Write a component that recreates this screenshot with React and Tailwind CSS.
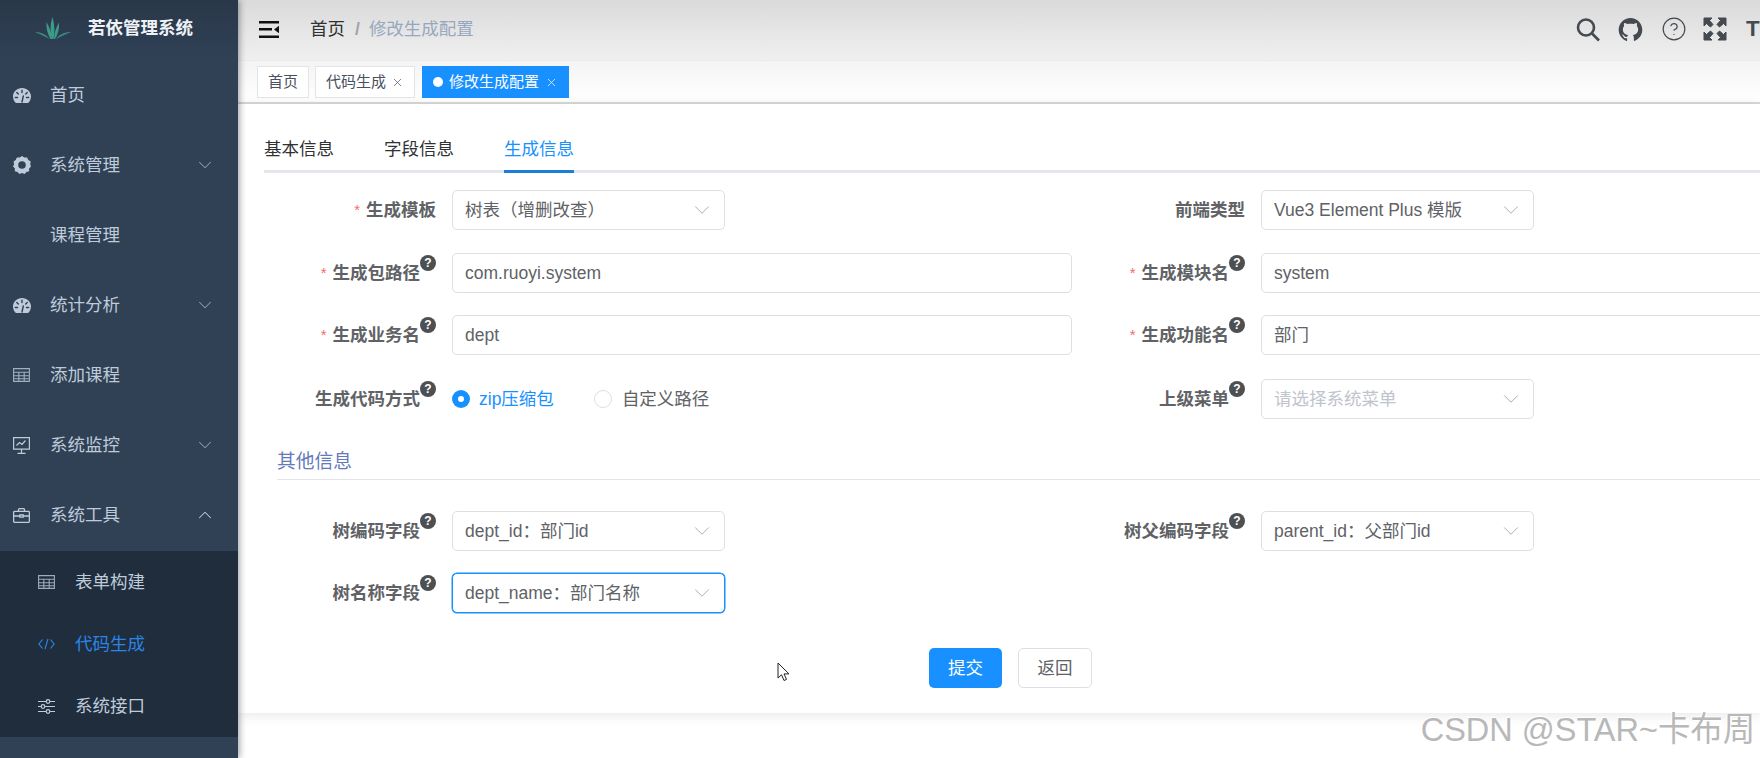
import { ChevronDown, ChevronUp, X, CircleHelp } from 'lucide-react';
import { AiOutlineGithub } from 'react-icons/ai';

const FONT = 'font-["Liberation_Sans","Noto_Sans_CJK_SC",sans-serif]';

function GaugeIcon() {
  return (
    <svg viewBox="0 0 18 15" className="w-[18px] h-[15px]" fill="currentColor">
      <path d="M9 0C4 0 0 3.800 0 8.600c0 2.200.8 4.200 2.100 5.700.3.400.8.700 1.300.700h11.200c.5 0 1-.3 1.300-.7C17.200 12.800 18 10.800 18 8.600 18 3.800 14 0 9 0z" />
      <g stroke="#304156" strokeWidth="1.400" strokeLinecap="round" fill="none">
        <path d="M9 2.200v2.400M3.800 4.400l1.500 1.600M14.200 4.400l-1.500 1.600M2.300 9.500h2.200M13.500 9.500h2.200M9 14l1.300-6" />
      </g>
    </svg>
  );
}

function GearIcon() {
  return (
    <svg viewBox="0 0 18 18" className="w-[18px] h-[18px]" fill="currentColor">
      <path fillRule="evenodd" d="M9 0l2.300 1.600 2.800-.2 1.200 2.600 2.400 1.400-.5 2.800L18 10.500l-1.900 2 .1 2.800-2.800.6L11.700 18 9 17l-2.700 1-1.700-2.100-2.800-.6.1-2.800-1.900-2 1.100-2.300-.5-2.800L2.700 4l1.200-2.600 2.800.2L9 0zm0 5.200a3.800 3.800 0 100 7.600 3.800 3.800 0 000-7.600z" />
    </svg>
  );
}

function TableIcon() {
  return (
    <svg viewBox="0 0 17 14" className="w-[17px] h-[14px] opacity-80" fill="none" stroke="currentColor" strokeWidth="1.100">
      <path d="M.6.6h15.800v12.800H.6zM.6 4.200h15.800M.6 7.800h15.800M.6 10.800h15.800M5.800 4.200v9.200M11.200 4.200v9.200" />
    </svg>
  );
}

function MonitorIcon() {
  return (
    <svg viewBox="0 0 17 17" className="w-[17px] h-[17px]" fill="none" stroke="currentColor" strokeWidth="1.200">
      <path d="M.6.6h15.800v11.600H.6zM8.500 12.200v4M4.500 16.400h8M3.500 8.500l3-3 2.500 2 3.500-4" />
    </svg>
  );
}

function ToolboxIcon() {
  return (
    <svg viewBox="0 0 17 15" className="w-[17px] h-[15px]" fill="none" stroke="currentColor" strokeWidth="1.300">
      <path d="M1.800 3.400h13.400a1.200 1.200 0 011.200 1.200v8.600a1.200 1.200 0 01-1.200 1.200H1.800a1.200 1.200 0 01-1.200-1.200V4.600a1.200 1.200 0 011.200-1.200zM5.500 3.400V1.800A1.200 1.200 0 016.700.6h3.600a1.200 1.200 0 011.200 1.200v1.600M.6 8h6M10.400 8h6M6.800 7h3.400v2.200H6.800z" />
    </svg>
  );
}

function CodeIcon() {
  return (
    <svg viewBox="0 0 17 12" className="w-[17px] h-[12px]" fill="none" stroke="currentColor" strokeWidth="1.200">
      <path d="M4.500 1.500L.9 6l3.600 4.500M12.500 1.500L16.100 6l-3.600 4.500M10 .8L7 11.200" />
    </svg>
  );
}

function SlidersIcon() {
  return (
    <svg viewBox="0 0 17 15" className="w-[17px] h-[15px]" fill="none" stroke="currentColor" strokeWidth="1.200">
      <path d="M0 2.500h8M12 2.500h5M0 7.500h3M7 7.500h10M0 12.500h8M12 12.500h5" />
      <circle cx="10" cy="2.500" r="1.800" />
      <circle cx="5" cy="7.500" r="1.800" />
      <circle cx="10" cy="12.500" r="1.800" />
    </svg>
  );
}

function Logo() {
  return (
    <svg viewBox="0 0 36 22" className="w-[36px] h-[22px]" fill="#3d9c86">
      <path d="M17 22C15 15 15 7 17.500 0 19.500 7 20 15 18.500 22z" />
      <path d="M15.500 22C12.500 17 11 11 11.500 5c3 5 5 11 5.500 17z" />
      <path d="M20 22c3-5 4.500-10.500 4-16.500-3 5-5 11-5 16.500z" />
      <path d="M14.500 22C10 19.500 5.500 17 0 15.500 4.500 14.500 11 17 14.500 22z" fillOpacity=".8" />
      <path d="M21 22c4.500-2.500 9.500-5 15-6.500-5-1-11.500 1.500-15 6.500z" fillOpacity=".8" />
    </svg>
  );
}

function NavItem({ icon: Icon, label, arrow }) {
  return (
    <div className="h-[70px] flex items-center text-[17.5px] text-[#bfcbd9]">
      <span className="w-[50px] pl-[13px] flex items-center">{Icon && <Icon />}</span>
      <span>{label}</span>
      {arrow === 'down' && <ChevronDown size={22} strokeWidth={1.100} className="ml-auto mr-[22px] text-[#909db0]" />}
      {arrow === 'up' && <ChevronUp size={22} strokeWidth={1.100} className="ml-auto mr-[22px] text-[#c5cfdb]" />}
    </div>
  );
}

function SubItem({ icon: Icon, label, active }) {
  return (
    <div className={`h-[62px] flex items-center text-[17.5px] ${active ? 'text-[#2b85e4]' : 'text-[#bfcbd9]'}`}>
      <span className="w-[75px] pl-[38px] flex items-center"><Icon /></span>
      <span>{label}</span>
    </div>
  );
}

function Sidebar() {
  return (
    <aside className="w-[238px] h-full shrink-0 bg-[#304156] shadow-[2px_0_6px_rgba(0,21,41,0.35)] z-10">
      <div className="h-[60px] flex items-center pl-[35px] pb-[4px] bg-gradient-to-b from-[#293749] to-[#304156]">
        <Logo />
        <span className="ml-[17px] text-[17.5px] font-bold text-[#eef1f5]">若依管理系统</span>
      </div>
      <NavItem icon={GaugeIcon} label="首页" />
      <NavItem icon={GearIcon} label="系统管理" arrow="down" />
      <NavItem label="课程管理" />
      <NavItem icon={GaugeIcon} label="统计分析" arrow="down" />
      <NavItem icon={TableIcon} label="添加课程" />
      <NavItem icon={MonitorIcon} label="系统监控" arrow="down" />
      <NavItem icon={ToolboxIcon} label="系统工具" arrow="up" />
      <div className="bg-[#1f2d3d] mt-[1px]">
        <SubItem icon={TableIcon} label="表单构建" />
        <SubItem icon={CodeIcon} label="代码生成" active />
        <SubItem icon={SlidersIcon} label="系统接口" />
      </div>
    </aside>
  );
}

function FullscreenIcon() {
  return (
    <svg viewBox="0 0 24 24" className="w-[24px] h-[24px]" fill="#444a50" stroke="#444a50" strokeWidth="1">
      <path d="M1 1h8L6.500 3.500 10 7.500 7.500 10 3.500 6.500 1 9z" />
      <path d="M23 1h-8l2.500 2.500L14 7.500 16.500 10l4-3.500L23 9z" />
      <path d="M1 23h8l-2.500-2.500 3.500-4L7.500 14l-4 3.500L1 15z" />
      <path d="M23 23h-8l2.500-2.500-3.500-4 2.500-2.500 4 3.500L23 15z" />
    </svg>
  );
}

function Header() {
  return (
    <div className="h-[61px] flex items-center pb-[2px] bg-gradient-to-b from-[#dadada] to-[#f0f0f0] border-b border-[#ececec]">
      <svg viewBox="0 0 20 17" className="ml-[21px] w-[20px] h-[17px]" fill="#111">
        <path d="M0 0h20v2.400H0zM0 7h13v2.400H0zM0 14.600h20V17H0zM20 4.800v7.400L15 8.500z" />
      </svg>
      <span className="ml-[31px] text-[17.5px] text-[#303133]">首页</span>
      <span className="ml-[10px] text-[17.5px] font-bold text-[#a0a4aa]">/</span>
      <span className="ml-[9px] text-[17.5px] text-[#97a8be]">修改生成配置</span>
      <div className="ml-auto flex items-center text-[#444a50]">
        <svg viewBox="0 0 24 24" className="w-[24px] h-[25px]" fill="none" stroke="#444a50" strokeWidth="2.600">
          <circle cx="10" cy="10" r="8" />
          <path d="M16 16l7 7" />
        </svg>
        <AiOutlineGithub className="ml-[17px] w-[27px] h-[27px]" />
        <CircleHelp size={26} strokeWidth={1.100} className="ml-[17px]" />
        <span className="ml-[16px]"><FullscreenIcon /></span>
        <span className="ml-[19px] mr-[-2px] w-[16px] overflow-hidden text-[22px] leading-none font-bold font-['Liberation_Sans'] whitespace-nowrap">TT</span>
      </div>
    </div>
  );
}

function Tag({ label, active, closable }) {
  return (
    <div
      className={`h-[32px] flex items-center px-[10px] text-[15px] border ${
        active ? 'ml-[1px] bg-[#1890ff] border-[#1890ff] text-white' : 'bg-white border-[#e2e4e8] text-[#495060]'
      }`}
    >
      {active && <span className="w-[10px] h-[10px] rounded-full bg-white mr-[6px]" />}
      <span>{label}</span>
      {closable && <X size={13} strokeWidth={1.300} className={active ? 'ml-[6px]' : 'ml-[5px]'} />}
    </div>
  );
}

function TagsBar() {
  return (
    <div className="h-[43px] flex items-start gap-[6px] pl-[19px] pt-[5px] bg-gradient-to-b from-[#f4f4f4] to-white border-b-2 border-[#d8d8d8]">
      <Tag label="首页" />
      <Tag label="代码生成" closable />
      <Tag label="修改生成配置" active closable />
    </div>
  );
}

function HelpDot() {
  return (
    <span className="w-[16px] h-[16px] mb-[21px] rounded-full bg-[#4d4f52] text-white text-[12px] leading-[16px] font-bold text-center shrink-0">?</span>
  );
}

function Field({ label, required, help, children }) {
  return (
    <div className="flex items-center">
      <div className="w-[187px] h-[40px] shrink-0 flex items-center justify-end pr-[16px] text-[17.5px] font-bold text-[#606266]">
        {required && <span className="mr-[6px] text-[#f56c6c] text-[15px] font-normal">*</span>}
        <span>{label}</span>
        {help && <HelpDot />}
      </div>
      {children}
    </div>
  );
}

function TextBox({ value }) {
  return (
    <div className="w-[620px] h-[40px] flex items-center px-[12px] text-[17.5px] text-[#606266] bg-white border border-[#dcdfe6] rounded-[5px]">
      {value}
    </div>
  );
}

function SelectBox({ value, placeholder, focused }) {
  return (
    <div
      className={`w-[273px] h-[40px] flex items-center justify-between pl-[12px] pr-[9px] text-[17.5px] bg-white rounded-[5px] border ${
        focused ? 'border-[#1890ff] shadow-[0_0_0_0.5px_#1890ff]' : 'border-[#dcdfe6]'
      } ${placeholder ? 'text-[#c0c4cc]' : 'text-[#606266]'}`}
    >
      <span className="whitespace-nowrap">{value || placeholder}</span>
      <ChevronDown size={26} strokeWidth={0.900} className="text-[#a8acb3] shrink-0" />
    </div>
  );
}

function RadioGroup() {
  return (
    <div className="flex items-center h-[40px] text-[17.5px]">
      <span className="w-[18px] h-[18px] rounded-full bg-[#1890ff] flex items-center justify-center">
        <span className="w-[6px] h-[6px] rounded-full bg-white" />
      </span>
      <span className="ml-[9px] text-[#1890ff]">zip压缩包</span>
      <span className="ml-[40px] w-[18px] h-[18px] rounded-full border border-[#dcdfe6] bg-white" />
      <span className="ml-[10px] text-[#606266]">自定义路径</span>
    </div>
  );
}

function GenInfoForm() {
  return (
    <div className="mt-[17px]">
      <div className="grid grid-cols-[809px_809px]">
        <div className="mb-[23px]"><Field label="生成模板" required><SelectBox value="树表（增删改查）" /></Field></div>
        <div className="mb-[23px]"><Field label="前端类型"><SelectBox value="Vue3 Element Plus 模版" /></Field></div>
        <div className="mb-[22px]"><Field label="生成包路径" required help><TextBox value="com.ruoyi.system" /></Field></div>
        <div className="mb-[22px]"><Field label="生成模块名" required help><TextBox value="system" /></Field></div>
        <div className="mb-[24px]"><Field label="生成业务名" required help><TextBox value="dept" /></Field></div>
        <div className="mb-[24px]"><Field label="生成功能名" required help><TextBox value="部门" /></Field></div>
        <Field label="生成代码方式" help><RadioGroup /></Field>
        <Field label="上级菜单" help><SelectBox placeholder="请选择系统菜单" /></Field>
      </div>

      <div className="mt-[31px] ml-[12px] h-[30px] text-[18.75px] leading-[24px] text-[#6379bb] border-b border-[#e2e4e8]">其他信息</div>

      <div className="mt-[31px] grid grid-cols-[809px_809px]">
        <div className="mb-[22px]"><Field label="树编码字段" help><SelectBox value="dept_id：部门id" /></Field></div>
        <div className="mb-[22px]"><Field label="树父编码字段" help><SelectBox value="parent_id：父部门id" /></Field></div>
        <Field label="树名称字段" help><SelectBox value="dept_name：部门名称" focused /></Field>
      </div>

      <div className="mt-[35px] flex gap-[16px] pl-[664px]">
        <button className="w-[73px] h-[40px] rounded-[5px] bg-[#1890ff] text-white text-[17.5px]">提交</button>
        <button className="w-[74px] h-[40px] rounded-[5px] bg-white border border-[#dcdfe6] text-[#606266] text-[17.5px]">返回</button>
      </div>
    </div>
  );
}

export default function App() {
  return (
    <div className={`relative w-full h-screen flex overflow-hidden bg-white ${FONT}`}>
      <Sidebar />
      <main className="flex-1 min-w-0 overflow-hidden">
        <Header />
        <TagsBar />
        <div className="h-[609px] bg-white pl-[27px] shadow-[0_2px_12px_rgba(0,0,0,0.1)]">
          <div className="w-[1600px] pt-[29px]">
            <div className="flex gap-[50px] h-[40px] -ml-[1px] border-b-[3px] border-[#e4e7ed] text-[17.5px] text-[#303133]">
              <span className="h-[40px] leading-[32px]">基本信息</span>
              <span className="h-[40px] leading-[32px]">字段信息</span>
              <span className="h-[40px] leading-[32px] text-[#1890ff] border-b-[3px] border-[#1a7fd6]">生成信息</span>
            </div>
            <GenInfoForm />
          </div>
        </div>
      </main>

      {/* 录屏里的鼠标指针 */}
      <svg viewBox="0 0 14 20" className="absolute left-[777px] top-[662px] w-[14px] h-[20px]" fill="white" stroke="#222" strokeWidth="1">
        <path d="M1 1v15l3.500-3.200 2.500 5.700 2.500-1.100-2.500-5.500H12z" />
      </svg>

      <div className="absolute right-[5px] bottom-[9px] origin-right scale-x-[0.955] text-[34px] leading-[40px] text-[#b8b8b8] [text-shadow:1px_1px_0_#fff,-1px_-1px_0_#fff] whitespace-nowrap">
        CSDN @STAR~卡布周
      </div>
    </div>
  );
}
